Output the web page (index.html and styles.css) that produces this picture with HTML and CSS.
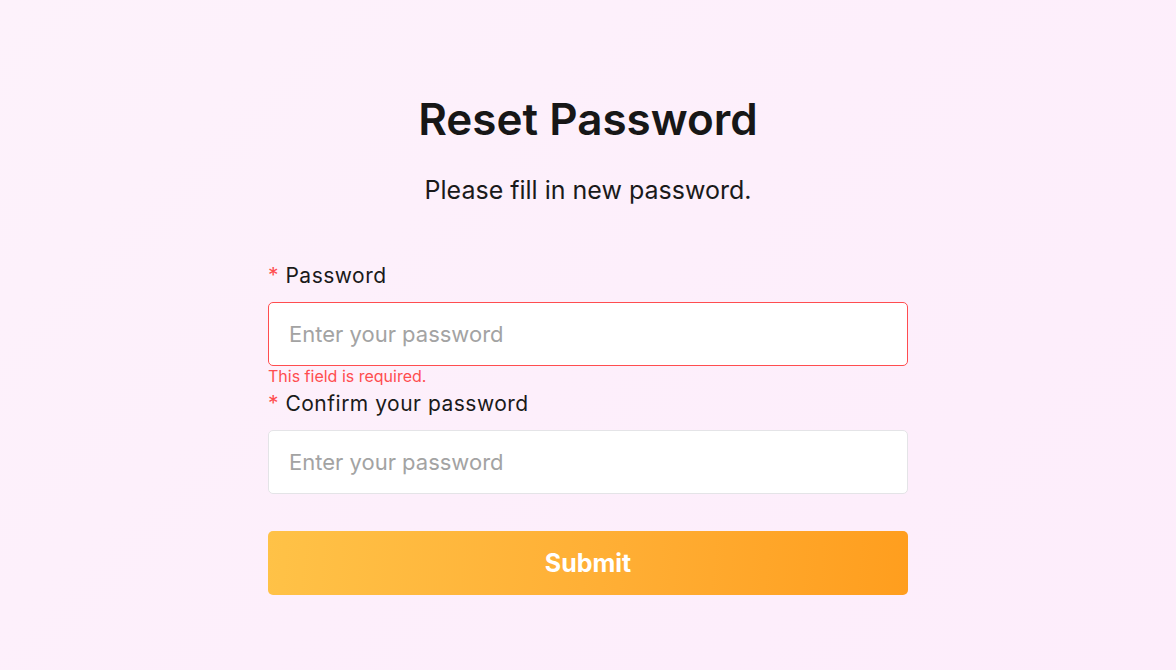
FILE: index.html
```html
<!DOCTYPE html>
<html lang="en">
<head>
<meta charset="utf-8">
<title>Reset Password</title>
<link rel="stylesheet" href="styles.css">
</head>
<body>
<main class="page">
  <section class="card">
    <h1 class="title">Reset Password</h1>
    <p class="subtitle">Please fill in new password.</p>
    <form class="form">
      <div class="field">
        <label class="label"><span class="req">*</span> Password</label>
        <input class="input input-error" type="password" placeholder="Enter your password">
        <div class="error">This field is required.</div>
      </div>
      <div class="field">
        <label class="label"><span class="req">*</span> Confirm your password</label>
        <input class="input" type="password" placeholder="Enter your password">
      </div>
      <button class="submit" type="button">Submit</button>
    </form>
  </section>
</main>
</body>
</html>
```

FILE: styles.css
```css
* { box-sizing: border-box; }
html, body { margin: 0; padding: 0; }
body {
  width: 1176px;
  height: 670px;
  overflow: hidden;
  background: linear-gradient(135deg, #fdf2fb 0%, #fdeffb 50%, #fdedfb 100%);
  font-family: "Inter", "Open Sans", sans-serif;
  color: #1a1a1a;
}
.page {
  display: flex;
  justify-content: center;
  padding-top: 92px;
}
.card {
  width: 640px;
  display: flex;
  flex-direction: column;
}
.title {
  margin: 0;
  text-align: center;
  font-size: 44px;
  line-height: 54px;
  font-weight: 600;
  color: #171717;
}
.subtitle {
  margin: 27px 0 0;
  text-align: center;
  font-size: 25px;
  line-height: 34px;
  font-weight: 400;
  color: #1a1a1a;
}
.form {
  margin-top: 55px;
  display: flex;
  flex-direction: column;
}
.field {
  display: flex;
  flex-direction: column;
}
.label {
  font-size: 21px;
  line-height: 28px;
  letter-spacing: 0.5px;
  color: #1a1a1a;
  margin-bottom: 12px;
}
.req { color: #ff4d4f; }
.input {
  width: 640px;
  height: 64px;
  border: 1px solid #e4e4e7;
  border-radius: 5px;
  background: #fff;
  padding: 0 20px;
  font-family: inherit;
  font-size: 22px;
  color: #1a1a1a;
  outline: none;
}
.input::placeholder { color: #a3a3a3; }
.input-error { border-color: #ff4d4f; }
.error {
  font-size: 16px;
  line-height: 20px;
  color: #ff4d4f;
}
.field + .field { margin-top: 4px; }
.submit {
  margin-top: 37px;
  height: 64px;
  border: none;
  border-radius: 5px;
  background: linear-gradient(95deg, #ffc247 0%, #ffae34 55%, #ff9e1e 100%);
  color: #fff;
  font-family: inherit;
  font-size: 25px;
  font-weight: 700;
}
```
